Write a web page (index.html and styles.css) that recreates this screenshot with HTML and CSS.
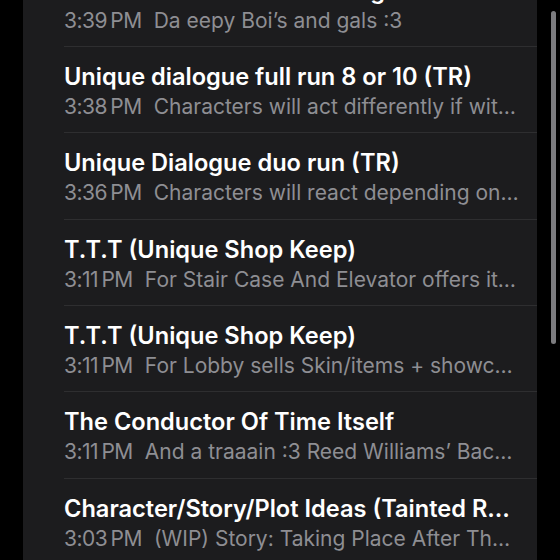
FILE: index.html
```html
<!DOCTYPE html>
<html lang="en">
<head>
    <meta charset="UTF-8">
    <meta name="viewport" content="width=device-width, initial-scale=1.0">
    <title>Notes</title>
    <link rel="stylesheet" href="styles.css">
</head>
<body>
    <div class="screen">
        <ul class="notes">
            <li class="note">
                <div class="note-title">Tired Hotel Residents Lounge</div>
                <div class="note-meta"><span class="note-time">3:39&#8239;PM</span><span class="note-preview">Da eepy Boi’s and gals :3</span></div>
            </li>
            <li class="note">
                <div class="note-title">Unique dialogue full run 8 or 10 (TR)</div>
                <div class="note-meta"><span class="note-time">3:38&#8239;PM</span><span class="note-preview">Characters will act differently if wit…</span></div>
            </li>
            <li class="note">
                <div class="note-title">Unique Dialogue duo run (TR)</div>
                <div class="note-meta"><span class="note-time">3:36&#8239;PM</span><span class="note-preview">Characters will react depending on…</span></div>
            </li>
            <li class="note">
                <div class="note-title">T.T.T (Unique Shop Keep)</div>
                <div class="note-meta"><span class="note-time">3:11&#8239;PM</span><span class="note-preview">For Stair Case And Elevator offers it…</span></div>
            </li>
            <li class="note">
                <div class="note-title">T.T.T (Unique Shop Keep)</div>
                <div class="note-meta"><span class="note-time">3:11&#8239;PM</span><span class="note-preview">For Lobby sells Skin/items + showc…</span></div>
            </li>
            <li class="note">
                <div class="note-title">The Conductor Of Time Itself</div>
                <div class="note-meta"><span class="note-time">3:11&#8239;PM</span><span class="note-preview">And a traaain :3 Reed Williams’ Bac…</span></div>
            </li>
            <li class="note">
                <div class="note-title">Character/Story/Plot Ideas (Tainted R…</div>
                <div class="note-meta"><span class="note-time">3:03&#8239;PM</span><span class="note-preview">(WIP) Story: Taking Place After Th…</span></div>
            </li>
        </ul>
        <div class="scrollbar"></div>
    </div>
</body>
</html>
```

FILE: styles.css
```css
html, body {
    margin: 0;
    padding: 0;
    background-color: #000;
    height: 100%;
    overflow: hidden;
}

body {
    font-family: Inter, "Noto Sans", sans-serif;
    -webkit-font-smoothing: antialiased;
}

.screen {
    position: relative;
    height: 560px;
    overflow: hidden;
}

.notes {
    list-style: none;
    margin: -40.5px 0 0 23px;
    padding: 0 0 10px 0;
    width: 514px;
    background-color: #1c1c1e;
    border-radius: 0 0 12px 12px;
}

.note {
    margin-left: 41px;
    padding: 15px 19px 11.4px 0;
    border-top: 1px solid #2e2e30;
}

.note:first-child {
    border-top-color: transparent;
}

.note-title {
    color: #fff;
    font-size: 23.6px;
    font-weight: 600;
    line-height: 30px;
    white-space: nowrap;
}

.note-meta {
    color: #8e8e93;
    font-size: 21px;
    line-height: 29px;
    white-space: nowrap;
}

.note-time {
    margin-right: 12px;
    letter-spacing: -0.5px;
}

.scrollbar {
    position: absolute;
    top: 11px;
    left: 551px;
    width: 5px;
    height: 333px;
    border-radius: 3px;
    background-color: #7c7c7f;
}
```
